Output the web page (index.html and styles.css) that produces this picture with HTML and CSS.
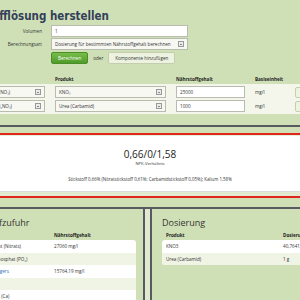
FILE: index.html
```html
<!DOCTYPE html>
<html lang="de">
<head>
    <meta charset="UTF-8">
    <meta name="viewport" content="width=device-width, initial-scale=1.0">
    <title>Nährstofflösung herstellen</title>
    <link rel="stylesheet" href="styles.css">
</head>
<body>
    <div class="page">
        <section class="calc">
            <h1>Nährstofflösung herstellen</h1>

            <div class="form-row">
                <label>Volumen</label>
                <div class="field">1</div>
            </div>
            <div class="form-row">
                <label>Berechnungsart</label>
                <div class="field select">Dosierung für bestimmten Nährstoffgehalt berechnen<span class="arrow"></span></div>
            </div>
            <div class="form-row actions-row">
                <span></span>
                <div class="actions">
                    <button class="btn btn-primary">Berechnen</button>
                    <span>oder</span>
                    <button class="btn">Komponente hinzufügen</button>
                </div>
            </div>

            <div class="components">
                <div class="comp-grid comp-head">
                    <span>Nährstoff</span>
                    <span>Produkt</span>
                    <span>Nährstoffgehalt</span>
                    <span>Basiseinheit</span>
                    <span></span>
                </div>
                <div class="comp-rows">
                    <div class="comp-grid">
                        <div class="field select">Stickstoff gesamt als (NO₃)<span class="arrow"></span></div>
                        <div class="field select">KNO₃<span class="arrow"></span></div>
                        <div class="field">25000</div>
                        <span>mg/l</span>
                        <button class="btn btn-small">Entfernen</button>
                    </div>
                    <div class="comp-grid">
                        <div class="field select">Ammoniumnitrat (NH₄NO₃)<span class="arrow"></span></div>
                        <div class="field select">Urea (Carbamid)<span class="arrow"></span></div>
                        <div class="field">1000</div>
                        <span>mg/l</span>
                        <button class="btn btn-small">Entfernen</button>
                    </div>
                </div>
            </div>
        </section>

        <div class="rule-top"></div>

        <section class="result">
            <div class="ratio">0,66/0/1,58</div>
            <div class="ratio-label">NPK-Verhältnis</div>
            <div class="ratio-detail">Stickstoff 0,66% (Nitratstickstoff 0,61%; Carbamidstickstoff 0,05%); Kalium 1,58%</div>
        </section>

        <div class="rule-bottom"></div>

        <div class="panels">
            <div class="panel">
                <h2>Nährstoffzufuhr</h2>
                <div class="table-head supply-cols">
                    <span>Nährstoff</span>
                    <span>Nährstoffgehalt</span>
                </div>
                <div class="table">
                    <div class="table-row supply-cols"><span>Stickstoff gesamt (Nitrats)</span><span>27060 mg/l</span></div>
                    <div class="table-row supply-cols"><span>Phosphor als Phosphat (PO₄)</span><span></span></div>
                    <div class="table-row supply-cols"><a href="#">Kalium des Düngers</a><span>15764,19 mg/l</span></div>
                    <div class="table-row supply-cols"><span></span><span></span></div>
                    <div class="table-row supply-cols"><span>Calcium gesamt (Ca)</span><span></span></div>
                </div>
            </div>

            <div class="panel">
                <h2>Dosierung</h2>
                <div class="table-head dose-cols">
                    <span>Produkt</span>
                    <span>Dosierung</span>
                </div>
                <div class="table">
                    <div class="table-row dose-cols"><span>KNO3</span><span>40,76413 g</span></div>
                    <div class="table-row dose-cols"><span>Urea (Carbamid)</span><span>1 g</span></div>
                </div>
            </div>
        </div>
    </div>
</body>
</html>
```

FILE: styles.css
```css
* {
    margin: 0;
    padding: 0;
    box-sizing: border-box;
}

html,
body {
    width: 300px;
    height: 300px;
    overflow: hidden;
}

body {
    font-family: 'Open Sans', sans-serif;
    font-size: 4.6px;
    color: #333;
    background: #d0e0b6;
}

.page {
    width: 520px;
    margin-left: -50px;
}

/* Rechner oben */
.calc {
    padding: 9px 0 11px;
}

.calc h1 {
    font-family: 'DejaVu Sans Condensed', 'DejaVu Sans', sans-serif;
    font-weight: bold;
    font-size: 11.5px;
    line-height: 14px;
    color: #34405a;
    padding-left: 3px;
    margin-bottom: 2px;
}

.form-row {
    display: grid;
    grid-template-columns: 92px 137px;
    column-gap: 9px;
    align-items: center;
    height: 12px;
    margin-bottom: 1px;
}

.form-row label {
    text-align: right;
}

.actions-row {
    margin-top: 2px;
}

.field {
    height: 12px;
    border: 1px solid #b8bcae;
    background: #fff;
    padding: 0 3px;
    display: flex;
    align-items: center;
    white-space: nowrap;
    overflow: hidden;
}

.select {
    background: #f8f8f3;
    justify-content: space-between;
    gap: 3px;
}

.arrow {
    flex: none;
    width: 6px;
    height: 6px;
    border: 1px solid #999;
    background: #ececec;
    position: relative;
}

.arrow::after {
    content: "";
    position: absolute;
    left: 1px;
    top: 1.5px;
    border-left: 1.2px solid transparent;
    border-right: 1.2px solid transparent;
    border-top: 1.5px solid #222;
}

.actions {
    display: flex;
    align-items: center;
    gap: 5px;
}

.btn {
    font-family: inherit;
    font-size: 4.6px;
    height: 12px;
    padding: 0 6px;
    border-radius: 2px;
    border: 1px solid #c3cfac;
    background: #eef3e1;
    color: #333;
    white-space: nowrap;
}

.btn-primary {
    background: linear-gradient(#78bd4b, #4f9b29);
    border-color: #4a8e27;
    color: #fff;
}

.components {
    margin-top: 12px;
}

.comp-grid {
    display: grid;
    grid-template-columns: 95px 111px 69px 30px 50px;
    column-gap: 10px;
    align-items: center;
}

.comp-head {
    height: 7px;
    line-height: 7px;
    font-weight: bold;
    color: #222;
    margin-bottom: 1px;
}

.comp-head span:first-child {
    visibility: hidden;
}

.comp-rows {
    background: #f4f6eb;
    padding: 2px 0;
    display: flex;
    flex-direction: column;
    gap: 2px;
}

.comp-rows .comp-grid {
    height: 12px;
}

.btn-small {
    justify-self: start;
    height: 11px;
    padding: 0 4px;
}

/* Trennlinien */
.rule-top {
    height: 10px;
    border-top: 2px solid #575b60;
    border-bottom: 2px solid #e1251b;
}

.rule-bottom {
    padding-top: 4px;
    background: #e1ead0;
}

.rule-bottom::after {
    content: "";
    display: block;
    height: 9px;
    background: #d0e0b6;
    border-top: 2px solid #e1251b;
    border-bottom: 2px solid #575b60;
}

/* Ergebnis */
.result {
    background: #fff;
    border-top: 1px solid #e6eedb;
    border-bottom: 1px solid #dadada;
    text-align: center;
    padding: 12px 0 9px;
    width: 400px;
}

.ratio {
    font-size: 10px;
    line-height: 13px;
    color: #222;
}

.ratio-label {
    font-size: 4.2px;
    line-height: 6px;
}

.ratio-detail {
    font-size: 4.4px;
    line-height: 6px;
    margin-top: 9px;
}

/* Panels unten */
.panels {
    display: grid;
    grid-template-columns: 195px 260px;
    column-gap: 5px;
    background: #e1ead0;
    height: 120px;
}

.panel {
    background: #d0e0b6;
    border: 2px solid #575b60;
    border-top: none;
    padding: 8px 7px 8px 10px;
}

.panel h2 {
    font-size: 9px;
    font-weight: normal;
    line-height: 11px;
    color: #333;
    margin-bottom: 3px;
}

.table-head {
    height: 9px;
    line-height: 9px;
    font-weight: bold;
    color: #222;
}

.table-head span,
.table-row > * {
    padding: 0 4px;
    white-space: nowrap;
    overflow: hidden;
}

.supply-cols {
    display: grid;
    grid-template-columns: 88px 1fr;
}

.dose-cols {
    display: grid;
    grid-template-columns: 117px 1fr;
}

.table {
    background: #fff;
    border-radius: 3px;
    overflow: hidden;
}

.table-row {
    height: 12.5px;
    align-items: center;
}

.table-row:nth-child(even) {
    background: #f0f4e4;
}

.table-row a {
    color: #2f6db5;
    text-decoration: none;
}
```
